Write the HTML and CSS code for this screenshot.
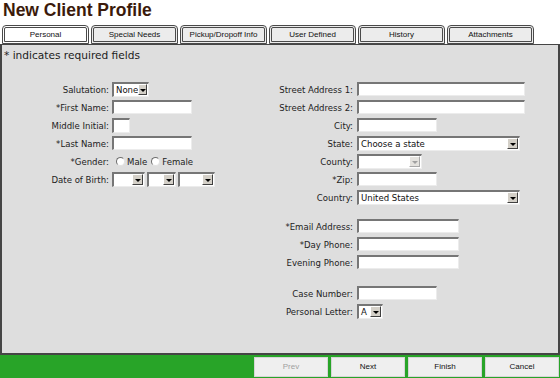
FILE: index.html
```html
<!DOCTYPE html>
<html lang="en">
<head>
    <meta charset="UTF-8">
    <title>New Client Profile</title>
    <link rel="stylesheet" href="styles.css">
</head>
<body>

    <h1 class="title">New Client Profile</h1>

    <div class="tabs">
        <div class="tab active">Personal</div>
        <div class="tab">Special Needs</div>
        <div class="tab">Pickup/Dropoff Info</div>
        <div class="tab">User Defined</div>
        <div class="tab">History</div>
        <div class="tab">Attachments</div>
    </div>

    <div class="panel">
        <p class="note">* indicates required fields</p>

        <div class="fields">
            <div class="col col-left">
                <div class="row">
                    <label>Salutation:</label>
                    <span class="select w37"><span class="value">None</span><span class="arrow"></span></span>
                </div>
                <div class="row">
                    <label>*First Name:</label>
                    <input type="text" class="w80">
                </div>
                <div class="row">
                    <label>Middle Initial:</label>
                    <input type="text" class="w18 tall">
                </div>
                <div class="row">
                    <label>*Last Name:</label>
                    <input type="text" class="w80">
                </div>
                <div class="row">
                    <label>*Gender:</label>
                    <span class="radio"></span><span class="radio-label">Male</span>
                    <span class="radio"></span><span class="radio-label">Female</span>
                </div>
                <div class="row">
                    <label>Date of Birth:</label>
                    <span class="dob">
                        <span class="select w33"><span class="value"></span><span class="arrow"></span></span>
                        <span class="select w29"><span class="value"></span><span class="arrow"></span></span>
                        <span class="select w37"><span class="value"></span><span class="arrow"></span></span>
                    </span>
                </div>
            </div>

            <div class="col col-right">
                <div class="row">
                    <label>Street Address 1:</label>
                    <input type="text" class="w168">
                </div>
                <div class="row">
                    <label>Street Address 2:</label>
                    <input type="text" class="w168">
                </div>
                <div class="row">
                    <label>City:</label>
                    <input type="text" class="w80">
                </div>
                <div class="row">
                    <label>State:</label>
                    <span class="select w163"><span class="value">Choose a state</span><span class="arrow"></span></span>
                </div>
                <div class="row">
                    <label>County:</label>
                    <span class="select w65 disabled"><span class="value"></span><span class="arrow"></span></span>
                </div>
                <div class="row">
                    <label>*Zip:</label>
                    <input type="text" class="w80">
                </div>
                <div class="row">
                    <label>Country:</label>
                    <span class="select w163"><span class="value">United States</span><span class="arrow"></span></span>
                </div>

                <div class="spacer"></div>

                <div class="row">
                    <label>*Email Address:</label>
                    <input type="text" class="w102">
                </div>
                <div class="row">
                    <label>*Day Phone:</label>
                    <input type="text" class="w102">
                </div>
                <div class="row">
                    <label>Evening Phone:</label>
                    <input type="text" class="w102">
                </div>

                <div class="spacer wide"></div>

                <div class="row">
                    <label>Case Number:</label>
                    <input type="text" class="w80">
                </div>
                <div class="row">
                    <label>Personal Letter:</label>
                    <span class="select w26"><span class="value">A</span><span class="arrow"></span></span>
                </div>
            </div>
        </div>
    </div>

    <div class="footer">
        <button class="btn" disabled>Prev</button>
        <button class="btn">Next</button>
        <button class="btn">Finish</button>
        <button class="btn">Cancel</button>
    </div>

</body>
</html>
```

FILE: styles.css
```css
body {
    margin: 0;
    height: 100vh;
    display: flex;
    flex-direction: column;
    background-color: #fff;
    font-family: "DejaVu Sans Condensed", "DejaVu Sans", sans-serif;
    font-size: 9.5px;
    color: #222;
    overflow: hidden;
}
.title {
    margin: 0;
    height: 24px;
    padding-left: 3px;
    font-family: "Liberation Sans", Arial, sans-serif;
    font-size: 17.5px;
    line-height: 20px;
    font-weight: bold;
    color: #3b1a0b;
}
.tabs {
    display: flex;
    align-items: flex-end;
    gap: 2px;
    height: 20px;
    padding-left: 2px;
}
.tab {
    box-sizing: border-box;
    width: 87px;
    height: 19px;
    border: 3px double #4a4a4a;
    border-radius: 4px 4px 0 0;
    background-color: #ececec;
    font-family: "Liberation Sans", Arial, sans-serif;
    font-size: 8px;
    line-height: 13px;
    text-align: center;
    color: #111;
}
.tab.active {
    background-color: #fff;
}
.panel {
    flex: 1;
    background-color: #dedede;
    border: 2px solid #454545;
    border-top: 1px solid #454545;
    padding: 3px 2px 0 2px;
}
.note {
    margin: 0;
    font-family: "DejaVu Sans", sans-serif;
    font-size: 10.6px;
    line-height: 14px;
}
.fields {
    display: flex;
    margin-top: 18px;
}
.col-left {
    width: 240px;
}
.row {
    display: flex;
    align-items: center;
    height: 18px;
}
.row label {
    width: 105px;
    margin-right: 3px;
    text-align: right;
}
.col-right .row label {
    width: 109px;
    margin-right: 4px;
}
.spacer {
    height: 11px;
}
.spacer.wide {
    height: 13px;
}
input[type="text"] {
    box-sizing: border-box;
    height: 14px;
    margin: 0;
    padding: 0;
    background-color: #fff;
    border-style: solid;
    border-width: 2px 1px 1px 2px;
    border-color: #767676 #ececec #ececec #767676;
}
input.tall {
    height: 15px;
}
.select {
    box-sizing: border-box;
    display: inline-flex;
    align-items: center;
    height: 15px;
    background-color: #fff;
    border-style: solid;
    border-width: 2px 1px 1px 2px;
    border-color: #767676 #ececec #ececec #767676;
}
.select .value {
    flex: 1;
    padding-left: 2px;
    line-height: 11px;
    color: #111;
}
.select .arrow {
    box-sizing: border-box;
    display: flex;
    align-items: center;
    justify-content: center;
    width: 11px;
    height: 11px;
    margin-right: 1px;
    background-color: #d4d0c8;
    border: 1px solid;
    border-color: #fff #404040 #404040 #fff;
}
.select .arrow::after {
    content: "";
    border-left: 3px solid transparent;
    border-right: 3px solid transparent;
    border-top: 3px solid #000;
    margin-top: 1px;
}
.select.disabled .arrow {
    background-color: #e4e2de;
    border-color: #fff #a8a8a8 #a8a8a8 #fff;
}
.select.disabled .arrow::after {
    border-top-color: #a0a0a0;
}
.dob {
    display: flex;
    gap: 2px;
}
.radio {
    box-sizing: border-box;
    width: 9px;
    height: 9px;
    margin: 0 2px 0 4px;
    border-radius: 50%;
    background-color: #fff;
    border: 1px solid;
    border-color: #6e6e6e #e2e2e2 #e2e2e2 #6e6e6e;
}
.w18 { width: 18px; }
.w26 { width: 26px; }
.w29 { width: 29px; }
.w33 { width: 33px; }
.w37 { width: 37px; }
.w65 { width: 65px; }
.w80 { width: 80px; }
.w102 { width: 102px; }
.w163 { width: 163px; }
.w168 { width: 168px; }
.footer {
    display: flex;
    justify-content: flex-end;
    align-items: center;
    gap: 3px;
    height: 23px;
    padding-right: 1px;
    background-color: #28a428;
}
.btn {
    box-sizing: border-box;
    width: 74px;
    height: 20px;
    margin: 0;
    padding: 0;
    background-color: #efefef;
    border: 1px solid #d6d6d6;
    font-family: "Liberation Sans", Arial, sans-serif;
    font-size: 8px;
    color: #111;
}
.btn:disabled {
    color: #a0a0a0;
}
```
